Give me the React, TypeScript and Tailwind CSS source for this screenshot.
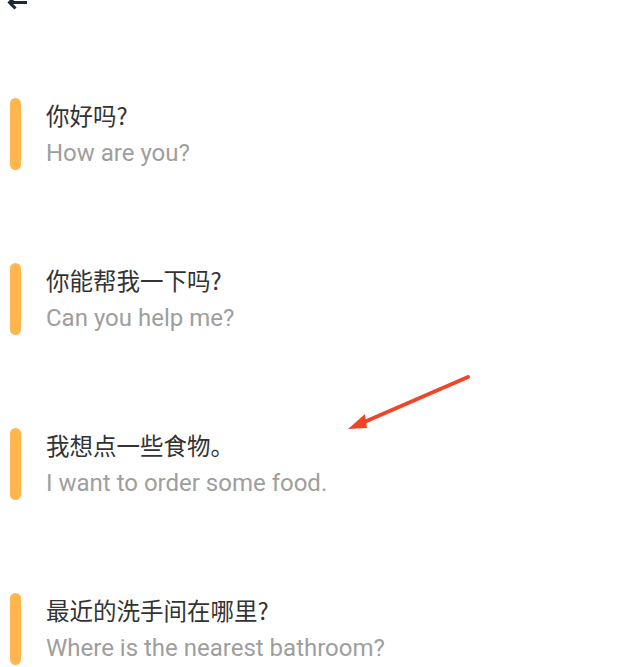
import React from "react";

const items = [
  { zh: "你好吗?", en: "How are you?" },
  { zh: "你能帮我一下吗?", en: "Can you help me?" },
  { zh: "我想点一些食物。", en: "I want to order some food." },
  { zh: "最近的洗手间在哪里?", en: "Where is the nearest bathroom?" },
];

export default function App() {
  return (
    <div className="relative w-[624px] h-[667px] overflow-hidden bg-white" style={{ fontFamily: 'Roboto, "Noto Sans CJK SC", sans-serif' }}>
      <div className="h-[98px]">
        <svg width="40" height="14" viewBox="0 0 40 14" className="block">
          <path d="M27 2.5H10.5 M16 -4L9.5 2.5L15.5 8.5" stroke="#1c2a38" strokeWidth="3" fill="none" strokeLinecap="butt" strokeLinejoin="miter" />
        </svg>
      </div>
      <div className="flex flex-col gap-[93px] pl-[10px]">
        {items.map((it) => (
          <div key={it.zh} className="flex h-[72px]">
            <div className="w-[11px] h-[72px] shrink-0 rounded-full bg-[#ffb74d]" />
            <div className="ml-[25px] flex flex-col">
              <div className="text-[23.5px] leading-[34px] text-[#333333] whitespace-nowrap" style={{ fontFamily: '"Noto Sans CJK SC", sans-serif' }}>{it.zh}</div>
              <div className="text-[24px] leading-[43px] text-[#9e9e9e] whitespace-nowrap">{it.en}</div>
            </div>
          </div>
        ))}
      </div>
      <svg className="absolute left-0 top-0" width="624" height="667">
        <line x1="468" y1="377" x2="362" y2="423" stroke="#ef4529" strokeWidth="4" strokeLinecap="round" />
        <polygon points="348,429 365,414 367,428" fill="#ef4529" />
      </svg>
    </div>
  );
}
